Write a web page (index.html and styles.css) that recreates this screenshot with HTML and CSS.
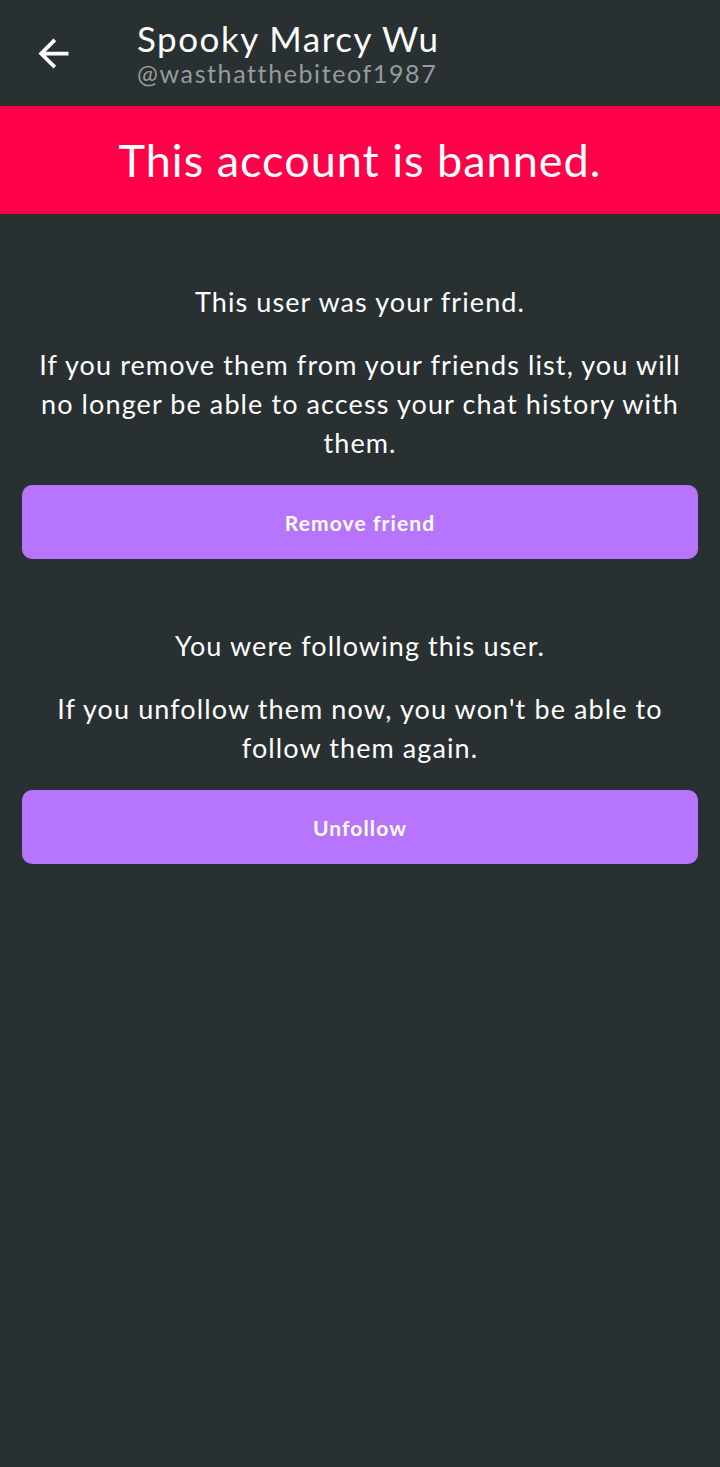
FILE: index.html
```html
<!DOCTYPE html>
<html lang="en">
<head>
  <meta charset="UTF-8" />
  <meta name="viewport" content="width=device-width, initial-scale=1.0"/>
  <title>Spooky Marcy Wu</title>
  <link rel="stylesheet" href="styles.css">
</head>
<body>
  <header class="topbar">
    <button class="back" aria-label="Back">
      <svg width="45" height="45" viewBox="0 0 24 24">
        <path d="M20 11H7.83l5.59-5.59L12 4l-8 8 8 8 1.41-1.41L7.83 13H20v-2z" fill="#fff"/>
      </svg>
    </button>
    <div class="names">
      <h1>Spooky Marcy Wu</h1>
      <p>@wasthatthebiteof1987</p>
    </div>
  </header>

  <div class="banned">This account is banned.</div>

  <main class="content">
    <section class="block">
      <p class="lead">This user was your friend.</p>
      <p>If you remove them from your friends list, you will no longer be able to access your chat history with them.</p>
      <button class="action">Remove friend</button>
    </section>

    <section class="block">
      <p class="lead">You were following this user.</p>
      <p>If you unfollow them now, you won't be able to follow them again.</p>
      <button class="action">Unfollow</button>
    </section>
  </main>
</body>
</html>
```

FILE: styles.css
```css
* {
  margin: 0;
  padding: 0;
  box-sizing: border-box;
  font-family: "Lato", "Noto Sans", sans-serif;
}

body {
  background: #293031;
  color: #fff;
  min-height: 1467px;
}

.topbar {
  height: 106px;
  display: flex;
  align-items: center;
  padding-left: 31px;
}

.back {
  background: none;
  border: none;
  width: 45px;
  height: 45px;
  display: flex;
  margin-right: 61px;
}

.names h1 {
  font-size: 35px;
  font-weight: normal;
  line-height: 40px;
  letter-spacing: 1.5px;
}

.names p {
  font-size: 25px;
  color: #969b9c;
  line-height: 30px;
  letter-spacing: 1.6px;
}

.banned {
  background: #ff0049;
  height: 108px;
  display: flex;
  align-items: center;
  justify-content: center;
  font-size: 45px;
  letter-spacing: 1px;
}

.content {
  padding: 1px 22px 0;
}

.block {
  padding-top: 67px;
  text-align: center;
}

.block p {
  font-size: 27px;
  line-height: 39px;
  margin-bottom: 24px;
  padding: 0 10px;
  letter-spacing: 1.1px;
}

.block p:last-of-type {
  margin-bottom: 23px;
}

.action {
  width: 100%;
  height: 74px;
  border: none;
  border-radius: 10px;
  background: #b774fc;
  color: #fff;
  font-size: 21px;
  font-weight: bold;
  letter-spacing: 1.1px;
}
```
